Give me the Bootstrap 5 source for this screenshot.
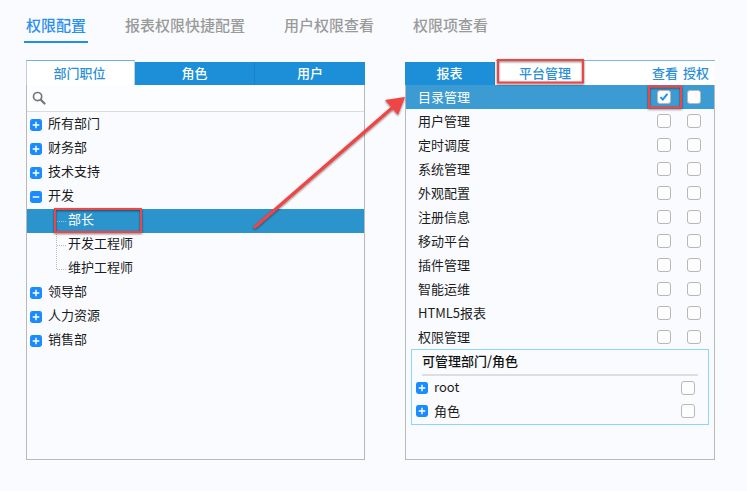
<!DOCTYPE html>
<html lang="zh-CN">
<head>
<meta charset="utf-8">
<title>权限配置</title>
<link href="https://cdn.jsdelivr.net/npm/bootstrap@5.3.0/dist/css/bootstrap.min.css" rel="stylesheet">
<style>
html,body{height:100%;overflow:hidden}
body{background:#f9fbfe;font-family:"Noto Sans CJK SC","Liberation Sans",sans-serif;font-size:13px;line-height:24px;color:#1c1c1c;position:relative}
.top-tabs{height:60px;padding-left:26px;gap:39px;align-items:flex-start}
.top-tab{font-size:15px;line-height:20px;padding-top:15px;color:#9a9a9a;font-weight:500;position:relative}
.top-tab.on{color:#2a8ef0}
.top-tab.on::after{content:"";position:absolute;left:-2px;right:-2px;top:41px;height:2px;background:#1f8ef1}
.panels{padding-left:26px;gap:40px}
.pane-l{width:339px}
.pane-r{width:310px}
.tabbar{height:25px;font-weight:500;text-align:center;line-height:21px}
.tb{background:#1c8fd8;color:#fff;margin-top:2px;border-right:1px solid #1a82c4}
.tb:last-child{border-right:0}
.tb.act{background:#fff;color:#2b8fd6;margin-top:0;border:1px solid #bfd0dc;border-top:1px solid #6fb3de;border-bottom:0;line-height:23px;padding-right:2px}
.pane-body{height:375px;border:1px solid #b9b9b9;border-top:0;position:relative}
.searchrow{height:27px;border-bottom:1px solid #dcdcdc;padding-left:5px;background:#fcfdff}
.tree{padding-top:1px}
.trow{height:24px;padding-left:3px;gap:6px}
.trow span{margin-bottom:4px}
.trow.sel{background:#2c94cd;color:#fff}
.trow.kid{padding-left:41px}
.pm{width:12px;height:12px;flex:none;display:block}
.kids{position:relative}
.kids::before{content:"";position:absolute;left:29px;top:0;height:60px;border-left:1px dotted #bbb}
.kid{position:relative}
.kid::before{content:"";position:absolute;left:30px;top:12px;width:9px;border-top:1px dotted #bbb}
.sel.kid::before{border-color:#9cc9e4}
.hd-r{display:flex;flex:1;justify-content:flex-end;gap:5px;padding-right:6px;color:#2b8fd6;border-top:1px solid #7db9e0;background:#fff;line-height:23px}
.hd-r span{width:26px;white-space:nowrap}
.rtb1{width:90px}
.rtb2{width:88px;background:#fff;color:#2b8fd6;border-top:1px solid #7db9e0;line-height:23px;padding-left:10px;margin-left:1px}
.prow{height:24px;padding-left:12px;padding-right:13px}
.prow>span{margin-bottom:1px}
.prow.sel{background:#3d9bd3;color:#fff}
.prow .cbs{gap:16px}
.cb{width:14px;height:14px;border:1.5px solid #b8b8b8;border-radius:3px;background:#fdfdfd;display:block;flex:none}
.subbox{margin:0 5px;height:76px;border:1px solid #8dd6f5}
.subhd{font-weight:500;margin:0 10px;height:26px;border-bottom:2px solid #dedede;line-height:22px;color:#111}
.srow{height:23.5px;padding:0 13px 0 4px;gap:6px}
.srow span{margin-bottom:1px}
.notes{position:absolute;left:0;top:0;pointer-events:none}
</style>
</head>
<body>
<nav class="d-flex top-tabs">
  <div class="top-tab on">权限配置</div>
  <div class="top-tab">报表权限快捷配置</div>
  <div class="top-tab">用户权限查看</div>
  <div class="top-tab">权限项查看</div>
</nav>
<main class="d-flex panels">
  <section class="pane-l">
    <div class="d-flex tabbar">
      <div class="tb act" style="width:109px">部门职位</div>
      <div class="tb" style="width:120px">角色</div>
      <div class="tb flex-grow-1">用户</div>
    </div>
    <div class="pane-body">
      <div class="searchrow d-flex align-items-center">
        <svg width="14" height="14" viewBox="0 0 15 15"><circle cx="6" cy="6" r="4.4" fill="none" stroke="#777" stroke-width="1.8"/><path d="M9.4 9.4 13.4 13.4" stroke="#777" stroke-width="2.4" stroke-linecap="round"/></svg>
      </div>
      <div class="tree">
        <div class="trow d-flex align-items-center"><svg class="pm"><use href="#plus"/></svg><span>所有部门</span></div>
        <div class="trow d-flex align-items-center"><svg class="pm"><use href="#plus"/></svg><span>财务部</span></div>
        <div class="trow d-flex align-items-center"><svg class="pm"><use href="#plus"/></svg><span>技术支持</span></div>
        <div class="trow d-flex align-items-center"><svg class="pm"><use href="#minus"/></svg><span>开发</span></div>
        <div class="kids">
          <div class="trow kid sel d-flex align-items-center"><span>部长</span></div>
          <div class="trow kid d-flex align-items-center"><span>开发工程师</span></div>
          <div class="trow kid d-flex align-items-center"><span>维护工程师</span></div>
        </div>
        <div class="trow d-flex align-items-center"><svg class="pm"><use href="#plus"/></svg><span>领导部</span></div>
        <div class="trow d-flex align-items-center"><svg class="pm"><use href="#plus"/></svg><span>人力资源</span></div>
        <div class="trow d-flex align-items-center"><svg class="pm"><use href="#plus"/></svg><span>销售部</span></div>
      </div>
    </div>
  </section>
  <section class="pane-r">
    <div class="d-flex tabbar">
      <div class="tb rtb1">报表</div>
      <div class="rtb2">平台管理</div>
      <div class="hd-r"><span>查看</span><span>授权</span></div>
    </div>
    <div class="pane-body">
      <div class="prow sel d-flex align-items-center justify-content-between"><span>目录管理</span><div class="cbs d-flex"><svg class="cb" viewBox="0 0 11 11"><path d="M2.2 5.6 4.4 7.8 8.6 2.6" fill="none" stroke="#1f8ef1" stroke-width="1.8"/></svg><i class="cb"></i></div></div>
      <div class="prow d-flex align-items-center justify-content-between"><span>用户管理</span><div class="cbs d-flex"><i class="cb"></i><i class="cb"></i></div></div>
      <div class="prow d-flex align-items-center justify-content-between"><span>定时调度</span><div class="cbs d-flex"><i class="cb"></i><i class="cb"></i></div></div>
      <div class="prow d-flex align-items-center justify-content-between"><span>系统管理</span><div class="cbs d-flex"><i class="cb"></i><i class="cb"></i></div></div>
      <div class="prow d-flex align-items-center justify-content-between"><span>外观配置</span><div class="cbs d-flex"><i class="cb"></i><i class="cb"></i></div></div>
      <div class="prow d-flex align-items-center justify-content-between"><span>注册信息</span><div class="cbs d-flex"><i class="cb"></i><i class="cb"></i></div></div>
      <div class="prow d-flex align-items-center justify-content-between"><span>移动平台</span><div class="cbs d-flex"><i class="cb"></i><i class="cb"></i></div></div>
      <div class="prow d-flex align-items-center justify-content-between"><span>插件管理</span><div class="cbs d-flex"><i class="cb"></i><i class="cb"></i></div></div>
      <div class="prow d-flex align-items-center justify-content-between"><span>智能运维</span><div class="cbs d-flex"><i class="cb"></i><i class="cb"></i></div></div>
      <div class="prow d-flex align-items-center justify-content-between"><span>HTML5报表</span><div class="cbs d-flex"><i class="cb"></i><i class="cb"></i></div></div>
      <div class="prow d-flex align-items-center justify-content-between"><span>权限管理</span><div class="cbs d-flex"><i class="cb"></i><i class="cb"></i></div></div>
      <div class="subbox">
        <div class="subhd">可管理部门/角色</div>
        <div class="srow d-flex align-items-center"><svg class="pm"><use href="#plus"/></svg><span class="flex-grow-1">root</span><i class="cb"></i></div>
        <div class="srow d-flex align-items-center"><svg class="pm"><use href="#plus"/></svg><span class="flex-grow-1">角色</span><i class="cb"></i></div>
      </div>
    </div>
  </section>
</main>
<svg width="0" height="0" class="notes">
  <defs>
    <symbol id="plus" viewBox="0 0 11 11"><rect width="11" height="11" rx="2.2" fill="#1a8cff"/><path d="M2.5 5.5h6M5.5 2.5v6" stroke="#fff" stroke-width="1.3"/></symbol>
    <symbol id="minus" viewBox="0 0 11 11"><rect width="11" height="11" rx="2.2" fill="#1a8cff"/><path d="M2.5 5.5h6" stroke="#fff" stroke-width="1.3"/></symbol>
    <filter id="sh" x="-20%" y="-20%" width="140%" height="140%"><feDropShadow dx="0" dy="1" stdDeviation="1" flood-color="#000" flood-opacity=".55"/></filter>
  </defs>
</svg>
<svg class="notes" width="747" height="491" viewBox="0 0 747 491">
  <g filter="url(#sh)" fill="none" stroke="#ef4444" stroke-width="2">
    <rect x="55" y="209" width="86" height="23"/>
    <rect x="498" y="60" width="85" height="22.5"/>
    <rect x="649" y="86.500" width="32" height="21"/>
    <path d="M255 227 392 108" stroke-width="3" stroke-linecap="round"/>
    <path d="M405 97 398 115 385 100Z" fill="#ef4444" stroke="none"/>
  </g>
</svg>
</body>
</html>
